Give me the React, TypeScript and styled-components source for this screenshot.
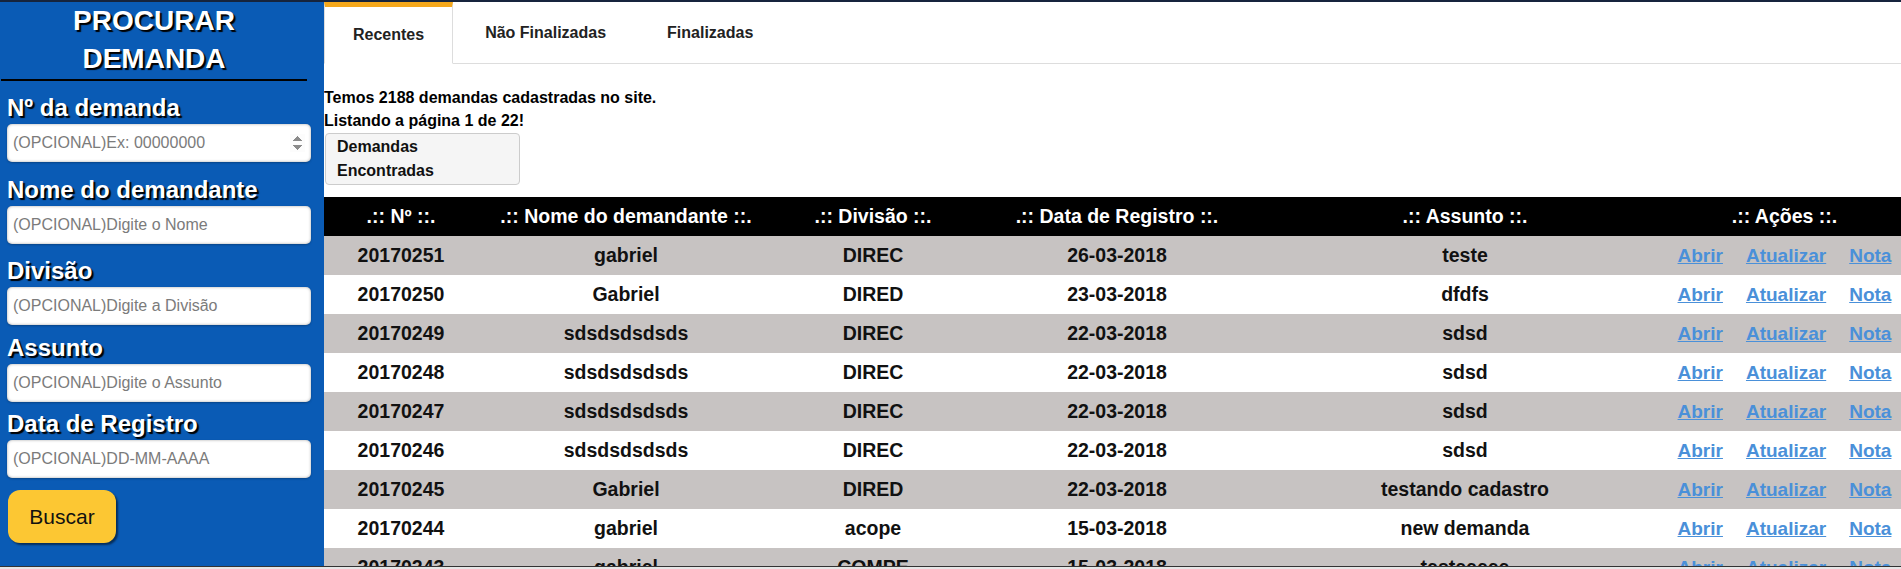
import React from "react";
import styled, { createGlobalStyle } from "styled-components";

const FONT = `"Liberation Sans", Arial, sans-serif`;

const GlobalStyle = createGlobalStyle`
  html, body { margin: 0; padding: 0; }
  body { font-family: ${FONT}; background: #fff; overflow: hidden; }
  *, *::before, *::after { box-sizing: border-box; }
`;

const Page = styled.div`
  height: 569px;
  display: flex;
  flex-direction: column;
  border-top: 2px solid #16243d;
  overflow: hidden;
`;

const Layout = styled.div`
  display: flex;
  flex: 1;
  min-height: 0;
`;

const Sidebar = styled.aside`
  width: 324px;
  flex-shrink: 0;
  background: #0a5bb5;
  display: flex;
  flex-direction: column;
  align-items: flex-start;
`;

const Title = styled.h1`
  align-self: stretch;
  margin: 0 17px 0 1px;
  padding-bottom: 1px;
  border-bottom: 2px solid #000;
  font: bold 28px/38px ${FONT};
  color: #fff;
  text-align: center;
  text-shadow: 2px 2px 1px #000;
`;

const Field = styled.div<{ $gap: number }>`
  margin-top: ${(p) => p.$gap}px;
  padding-left: 7px;
  display: flex;
  flex-direction: column;
  gap: 2px;
`;

const Label = styled.label`
  font: bold 24px/28px ${FONT};
  color: #fff;
  text-shadow: 2px 2px 1px #000;
`;

const Input = styled.input`
  width: 304px;
  height: 38px;
  border: none;
  border-radius: 5px;
  background: #fff;
  box-shadow: inset 0 0 3px rgba(0, 0, 0, 0.35), 0 1px 2px rgba(0, 0, 0, 0.25);
  padding: 0 6px;
  font: 16px ${FONT};
  color: #333;
  outline: none;
  &::placeholder {
    color: #7b7b7b;
  }
  &::-webkit-inner-spin-button {
    opacity: 1;
  }
`;

const SearchButton = styled.button`
  margin: 12px 0 0 8px;
  width: 108px;
  height: 53px;
  background: #fcc733;
  border: none;
  border-radius: 12px;
  box-shadow: 2px 2px 2px rgba(0, 0, 0, 0.5);
  font: 21px ${FONT};
  color: #111;
  cursor: pointer;
`;

const Main = styled.main`
  flex: 1;
  min-width: 0;
  overflow: hidden;
`;

const TabBar = styled.nav`
  display: flex;
  gap: 3px;
  height: 62px;
  border-bottom: 1px solid #ddd;
`;

const Tab = styled.div<{ $active?: boolean }>`
  height: ${(p) => (p.$active ? "62px" : "61px")};
  margin-bottom: ${(p) => (p.$active ? "-1px" : "0")};
  display: flex;
  align-items: center;
  padding: 0 28px;
  border: 1px solid ${(p) => (p.$active ? "#ddd" : "transparent")};
  border-top: ${(p) => (p.$active ? "5px solid #f5a81c" : "1px solid transparent")};
  border-bottom: ${(p) => (p.$active ? "1px solid #fff" : "none")};
  background: ${(p) => (p.$active ? "#fff" : "transparent")};
  font: bold 16px ${FONT};
  color: #222;
  white-space: nowrap;
`;

const Info = styled.p`
  margin: 22px 0 1px;
  font: bold 16px/23px ${FONT};
  color: #000;
`;

const FoundBox = styled.div`
  margin-left: 1px;
  width: 195px;
  padding: 1px 11px;
  border: 1px solid #ccc;
  border-radius: 4px;
  background: #f5f5f5;
  font: bold 16px/24px ${FONT};
  color: #111;
`;

const Table = styled.table`
  width: 100%;
  table-layout: fixed;
  border-collapse: collapse;
  margin-top: 12px;
`;

const HeadCell = styled.th`
  height: 39px;
  padding: 0;
  background: #000;
  color: #fff;
  font: bold 19.5px ${FONT};
  text-align: center;
  white-space: nowrap;
`;

const Row = styled.tr<{ $shaded: boolean }>`
  background: ${(p) => (p.$shaded ? "#c7c3c2" : "#fff")};
`;

const Cell = styled.td`
  height: 39px;
  padding: 0;
  text-align: center;
  vertical-align: middle;
  font: bold 19.5px ${FONT};
  color: #111;
  white-space: nowrap;
`;

const Actions = styled.div`
  display: flex;
  justify-content: center;
  gap: 23px;
`;

const ActionLink = styled.a`
  color: #4a90d9;
  text-decoration: underline;
  font: bold 19px ${FONT};
  cursor: pointer;
`;

const BottomBar = styled.div`
  height: 3px;
  flex-shrink: 0;
  border-top: 1px solid #333;
  background: #e6e6e6;
`;

const columns = [154, 296, 198, 290, 406, 233];
const headers = [
  ".:: Nº ::.",
  ".:: Nome do demandante ::.",
  ".:: Divisão ::.",
  ".:: Data de Registro ::.",
  ".:: Assunto ::.",
  ".:: Ações ::.",
];

const rows = [
  ["20170251", "gabriel", "DIREC", "26-03-2018", "teste"],
  ["20170250", "Gabriel", "DIRED", "23-03-2018", "dfdfs"],
  ["20170249", "sdsdsdsdsds", "DIREC", "22-03-2018", "sdsd"],
  ["20170248", "sdsdsdsdsds", "DIREC", "22-03-2018", "sdsd"],
  ["20170247", "sdsdsdsdsds", "DIREC", "22-03-2018", "sdsd"],
  ["20170246", "sdsdsdsdsds", "DIREC", "22-03-2018", "sdsd"],
  ["20170245", "Gabriel", "DIRED", "22-03-2018", "testando cadastro"],
  ["20170244", "gabriel", "acope", "15-03-2018", "new demanda"],
  ["20170243", "gabriel", "COMPE", "15-03-2018", "testeeeee"],
];

const fields = [
  { label: "Nº da demanda", placeholder: "(OPCIONAL)Ex: 00000000", type: "number", gap: 13 },
  { label: "Nome do demandante", placeholder: "(OPCIONAL)Digite o Nome", type: "text", gap: 14 },
  { label: "Divisão", placeholder: "(OPCIONAL)Digite a Divisão", type: "text", gap: 13 },
  { label: "Assunto", placeholder: "(OPCIONAL)Digite o Assunto", type: "text", gap: 9 },
  { label: "Data de Registro", placeholder: "(OPCIONAL)DD-MM-AAAA", type: "text", gap: 8 },
];

export default function App() {
  return (
    <>
      <GlobalStyle />
      <Page>
        <Layout>
          <Sidebar>
            <Title>
              PROCURAR
              <br />
              DEMANDA
            </Title>
            {fields.map((f, i) => (
              <Field key={f.label} $gap={f.gap}>
                <Label htmlFor={`f${i}`}>{f.label}</Label>
                <Input id={`f${i}`} type={f.type} placeholder={f.placeholder} />
              </Field>
            ))}
            <SearchButton>Buscar</SearchButton>
          </Sidebar>
          <Main>
            <TabBar>
              <Tab $active>Recentes</Tab>
              <Tab>Não Finalizadas</Tab>
              <Tab>Finalizadas</Tab>
            </TabBar>
            <Info>
              Temos 2188 demandas cadastradas no site.
              <br />
              Listando a página 1 de 22!
            </Info>
            <FoundBox>Demandas Encontradas</FoundBox>
            <Table>
              <colgroup>
                {columns.map((w, i) => (
                  <col key={i} style={{ width: w }} />
                ))}
              </colgroup>
              <thead>
                <tr>
                  {headers.map((h) => (
                    <HeadCell key={h}>{h}</HeadCell>
                  ))}
                </tr>
              </thead>
              <tbody>
                {rows.map((r, i) => (
                  <Row key={r[0]} $shaded={i % 2 === 0}>
                    {r.map((c, j) => (
                      <Cell key={j}>{c}</Cell>
                    ))}
                    <Cell>
                      <Actions>
                        <ActionLink>Abrir</ActionLink>
                        <ActionLink>Atualizar</ActionLink>
                        <ActionLink>Nota</ActionLink>
                      </Actions>
                    </Cell>
                  </Row>
                ))}
              </tbody>
            </Table>
          </Main>
        </Layout>
        <BottomBar />
      </Page>
    </>
  );
}
